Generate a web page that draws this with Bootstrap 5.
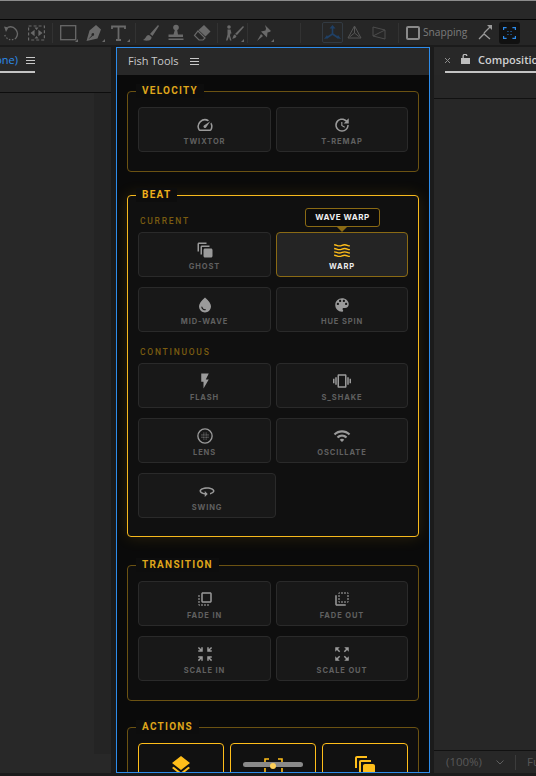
<!DOCTYPE html>
<html lang="en">
<head>
    <meta charset="UTF-8">
    <title>Fish Tools</title>
    <link href="https://cdn.jsdelivr.net/npm/bootstrap@5.3.3/dist/css/bootstrap.min.css" rel="stylesheet">
    <style>
        html, body { height: 776px; overflow: hidden; background: #1b1b1b; }
        body { font-family: "Open Sans", "Noto Sans", sans-serif; }

        /* app chrome */
        .top-strip { height: 20px; background: #282828; border-top: 1px solid #8c8c8c; border-bottom: 1px solid #050505; }
        .tool-strip { height: 25px; background: #262626; padding-left: 3px; color: #696969; }
        .tool-strip svg { display: block; flex: none; }
        .tool-sep { width: 1px; height: 20px; background: #323232; flex: none; }
        .mx5 { margin-left: 5px; } .mx6 { margin-left: 6px; } .mx7 { margin-left: 7px; } .mx9 { margin-left: 9px; } .mx3 { margin-left: 3px; }
        .mx26 { margin-left: 26px; } .mx11 { margin-left: 11px; } .mx12 { margin-left: 12px; }
        .axis-box { width: 21px; height: 21px; margin-left: 21px; border: 1px solid #323a42; border-radius: 2px; color: #1f4066; }
        .snap-box { width: 14px; height: 14px; border: 2px solid #8a8a8a; border-radius: 2px; margin-left: 7px; flex: none; }
        .snap-text { font-size: 10.2px; color: #7c7c7c; margin-left: 3px; }
        .focus-box { width: 21px; height: 22px; background: #111; border-radius: 3px; margin-left: 7px; color: #2d8ceb; }

        .work-row { height: 726px; margin-top: 2px; }
        .side-left { width: 111px; background: #282828; }
        .side-right { width: 102px; margin-left: 4px; background: #272727; }
        .panel-head { height: 28px; background: #282828; color: #c8c8c8; font-size: 11px; }
        .tab-line { height: 26px; padding-top: 3px; border-bottom: 2px solid #c4c4c4; white-space: nowrap; }
        .tab-none { width: 35px; }
        .tab-none span { color: #2d8ceb; }
        .tab-comp { margin-left: 11px; color: #d0d0d0; font-weight: 600; overflow: hidden; }
        .tab-comp span { flex: none; }
        .tab-x { margin-right: 11px; }
        .tab-lock { margin-right: 8px; margin-top: -4px; }
        .burger { width: 9px; height: 7px; border-top: 1px solid #c8c8c8; border-bottom: 1px solid #c8c8c8; position: relative; flex: none; }
        .burger::after { content: ""; position: absolute; left: 0; right: 0; top: 2px; height: 1px; background: #c8c8c8; }
        .sub-left { height: 18px; border-bottom: 1px solid #0d0d0d; background: #282828; }
        .sub-right { height: 24px; border-bottom: 1px solid #111; background: #272727; }
        .left-rest { width: 17px; height: 661px; background: #242424; }
        .right-foot { height: 23px; border-top: 1px solid #111; color: #585858; font-size: 11.5px; padding-left: 12px; white-space: nowrap; overflow: hidden; }
        .foot-chev { margin-left: 14px; flex: none; }
        .foot-sep { width: 1px; height: 15px; background: #3c3c3c; margin: 0 11px; flex: none; }

        /* fish tools panel */
        .fish-panel { width: 314px; margin-left: 5px; border: 1px solid #2d8ceb; overflow: hidden; background: #0b0b0b; }
        .fish-head { height: 27px; padding-left: 11px; background: #282828; color: #c8c8c8; font-size: 11px; gap: 11px; flex: none; }
        .fish-body { padding: 16px 10px 0; height: 700px; overflow: hidden; background: #0a0a0a; }
        .fx-group { position: relative; border: 1px solid #6b5212; border-radius: 4px; padding: 15px 10px 19px; margin-bottom: 23px; background: #0e0e0e; }
        .fx-group.is-hot { border-color: #f7b91d; background: #101010; padding-top: 19px; padding-bottom: 18px; margin-bottom: 28px; box-shadow: 0 0 16px rgba(255, 190, 30, .14); }
        .fx-group.is-trans { margin-bottom: 26px; }
        .fx-title { position: absolute; top: -8px; left: 8px; padding: 0 6px; height: 14px; line-height: 14px; background: #0d0d0d; color: #dfa51b; font-family: Roboto, sans-serif; font-size: 10px; font-weight: 700; letter-spacing: 1.25px; }
        .is-hot .fx-title { color: #efb01c; }
        .fx-sub { height: 12px; line-height: 12px; margin: 0 0 5px 2px; color: #7a5c10; font-family: Roboto, sans-serif; font-size: 8.5px; font-weight: 500; letter-spacing: 1.75px; }
        .fx-sub.next { margin-top: 14px; }
        .fx-grid { display: grid; grid-template-columns: 133px 132px; gap: 10px 5px; }
        .fx-btn { position: relative; height: 45px; padding-top: 8px; background: #181818; border: 1px solid #2a2a2a; border-radius: 4px; color: #9a9a9a; }
        .fx-btn svg { display: block; }
        .fx-btn span { margin-top: 3px; line-height: 10px; color: #606060; font-family: Inter, sans-serif; font-size: 7.5px; font-weight: 700; letter-spacing: .9px; }
        .fx-btn.is-on { background: #242424; border-color: #8a6a14; color: #ffbe1a; }
        .fx-btn.is-on span { color: #ececec; }
        .fx-wide { width: 138px; }
        .fx-tip { position: absolute; top: -25px; left: 28px; width: 75px; height: 19px; line-height: 16px; text-align: center; background: #0b0b0b; border: 1px solid #8a6a14; border-radius: 3px; color: #f0f0f0; font-family: Inter, sans-serif; font-size: 8px; font-weight: 700; letter-spacing: .5px; }
        .fx-tip::after { content: ""; position: absolute; left: 31px; top: 18px; border: 5px solid transparent; border-bottom-width: 0; border-top-color: #8a6a14; }
        .act-row { display: grid; grid-template-columns: repeat(3, 86px); gap: 6px; }
        .act-btn { height: 45px; padding-top: 10px; background: #111; border: 1px solid #ffbe1a; border-radius: 4px; color: #ffbe1a; }
        .act-btn svg { display: block; }
    </style>
</head>
<body class="d-flex flex-column">

<div class="top-strip"></div>

<!-- tool bar -->
<div class="tool-strip d-flex align-items-center">
    <svg width="16" height="18" viewBox="0 0 16 18" fill="none" stroke="currentColor" stroke-width="1.300"><path d="M4.500 3.500a7 7 0 0 1 8.500 10.500"/><path d="M13 14a7 7 0 0 1-11.500-4" stroke-dasharray="1.500 1.500"/><path d="M1 2.500l4.500 1L3 8z" fill="currentColor" stroke="none"/></svg>
    <svg class="mx9" width="17" height="16" viewBox="0 0 17 16" fill="none" stroke="currentColor" stroke-width="1.200" stroke-dasharray="3 2"><rect x=".6" y="1" width="15.800" height="14"/><path d="M3 8h1.500M14 8h-1.500M3.500 8L6 6v4zM13.500 8L11 6v4z" fill="currentColor" stroke-dasharray="none"/><path d="M6.500 2.500h4L8.500 5zM6.500 13.500h4L8.500 11z" fill="currentColor" stroke="none"/></svg>
    <div class="tool-sep mx7"></div>
    <svg class="mx7" width="18" height="18" viewBox="0 0 18 18" fill="none" stroke="currentColor" stroke-width="1.300"><rect x=".7" y="1.700" width="15" height="14"/><path d="M18 15v3h-3z" fill="currentColor" stroke="none"/></svg>
    <svg class="mx7" width="20" height="18" viewBox="0 0 20 18" fill="currentColor"><path d="M11 1l5 4.500-3.500 9L1.500 17l3-10.500zM6.800 11.300L3.500 15l1-.6 3.200-2.600a1.300 1.300 0 1 0-.9-.5z"/><path d="M20 15v3h-3z"/></svg>
    <svg class="mx6" width="19" height="18" viewBox="0 0 19 18" fill="none" stroke="currentColor" stroke-width="1.800"><path d="M1 5V2.500h13V5M7.500 2.500v13M5 16h5"/><path d="M19 15v3h-3z" fill="currentColor" stroke="none"/></svg>
    <div class="tool-sep mx5"></div>
    <svg class="mx5" width="18" height="18" viewBox="0 0 18 18" fill="currentColor"><path d="M17 1L9 10l2.500 2L18 2zM8 11c-3.500 0-2.500 3.500-6 5 4.500 1.500 9 .5 8.500-3z"/></svg>
    <svg class="mx9" width="16" height="18" viewBox="0 0 16 18" fill="currentColor"><circle cx="8" cy="3.500" r="2.800"/><path d="M6.800 6h2.400l.8 4.500h5v2.500H.5v-2.500h5zM.5 14.500h15V16H.5z"/></svg>
    <svg class="mx9" width="18" height="18" viewBox="0 0 18 18" fill="currentColor"><path d="M11 1l6.500 6.500-5 5L5.500 6z"/><path d="M5 7l7 7-2 2H6l-4.500-4.500z" fill="none" stroke="currentColor" stroke-width="1.200"/></svg>
    <div class="tool-sep mx6"></div>
    <svg class="mx6" width="20" height="18" viewBox="0 0 20 18" fill="currentColor"><circle cx="5" cy="3" r="1.800"/><path d="M3.500 5.500h3l1 4h-1l-.5 2 1.500 5H6l-1-4-1.500 4H2l1.500-6zM19 2l1 1-7 8-2-1zM10.500 10.500l2 1.500c-.5 2-2 2.500-4.500 2.500 1.500-1 1-3.500 2.500-4z"/><path d="M20 15v3h-3z"/></svg>
    <div class="tool-sep mx3"></div>
    <svg class="mx7" width="19" height="18" viewBox="0 0 19 18" fill="currentColor"><path d="M10 1l6 6-1.500 1-2 .5-.5 5-6-6 4.500-1 .5-2zM6 10l2 2-6 5z"/><path d="M19 15v3h-3z"/></svg>
    <div class="tool-sep mx26"></div>
    <div class="axis-box d-flex align-items-center justify-content-center">
        <svg width="17" height="15" viewBox="0 0 17 15" fill="none" stroke="currentColor" stroke-width="1.600"><path d="M8.500 2v7M8.500 9l-6 4M8.500 9l6 4"/><path d="M8.500 0l3 3.500h-6zM0 14l3-4 1.500 3zM17 14l-3-4-1.500 3z" fill="currentColor" stroke="none"/></svg>
    </div>
    <svg class="mx3" width="17" height="16" viewBox="0 0 17 16" fill="none" stroke="#555"><path d="M8.500 2v6M8.500 8l-5 4M8.500 8l5 4M8.500 1L2 13h13z"/></svg>
    <svg class="mx9" width="14" height="16" viewBox="0 0 14 16" fill="none" stroke="#4c4c4c"><path d="M1 2l12 3v9L1 11zM1 11l12-6"/></svg>
    <div class="tool-sep mx12"></div>
    <div class="snap-box"></div>
    <div class="snap-text">Snapping</div>
    <svg class="mx11" width="14" height="15" viewBox="0 0 14 15" fill="none" stroke="#9a9a9a" stroke-width="1.300"><path d="M1 14l5-5 6 5M6 8l7-7"/><path d="M14 0v5l-5-5z" fill="#9a9a9a" stroke="none"/></svg>
    <div class="focus-box d-flex align-items-center justify-content-center">
        <svg width="13" height="12" viewBox="0 0 13 12" fill="none" stroke="currentColor" stroke-width="1.200"><path d="M.6 3V.6h3M9.400.6h3V3M12.400 9v2.400h-3M3.600 11.400h-3V9M4.500 4.500h.9M7.600 4.500h.9M4.500 7.500h.9M7.600 7.500h.9"/></svg>
    </div>
</div>

<div class="work-row d-flex">
    <!-- left panel -->
    <div class="side-left d-flex flex-column">
        <div class="panel-head">
            <div class="tab-line tab-none d-flex align-items-center justify-content-end gap-2">
                <span>(none)</span>
                <div class="burger"></div>
            </div>
        </div>
        <div class="sub-left"></div>
        <div class="d-flex justify-content-end">
            <div class="left-rest"></div>
        </div>
    </div>

    <!-- fish tools -->
    <div class="fish-panel d-flex flex-column">
        <div class="fish-head d-flex align-items-center">
            <span>Fish Tools</span>
            <div class="burger"></div>
        </div>
        <div class="fish-body">

            <div class="fx-group">
                <div class="fx-title">VELOCITY</div>
                <div class="fx-grid">
                    <div class="fx-btn d-flex flex-column align-items-center">
                        <svg width="18" height="18" viewBox="0 0 24 24" fill="currentColor"><path d="M20.380 8.570l-1.230 1.850a8 8 0 0 1-.22 7.580H5.070A8 8 0 0 1 15.580 6.850l1.850-1.230A10 10 0 0 0 3.350 19a2 2 0 0 0 1.720 1h13.850a2 2 0 0 0 1.740-1 10 10 0 0 0-.27-10.430zm-9.790 6.840a2 2 0 0 0 2.830 0l5.660-8.490-8.490 5.660a2 2 0 0 0 0 2.830z"/></svg>
                        <span>TWIXTOR</span>
                    </div>
                    <div class="fx-btn d-flex flex-column align-items-center">
                        <svg width="18" height="18" viewBox="0 0 24 24" fill="currentColor"><path d="M21 10.120h-6.780l2.740-2.820c-2.730-2.700-7.150-2.800-9.880-.1-2.730 2.710-2.730 7.080 0 9.790s7.150 2.710 9.880 0C18.320 15.650 19 14.080 19 12.100h2c0 1.980-.88 4.550-2.640 6.290-3.510 3.480-9.210 3.480-12.720 0-3.500-3.470-3.530-9.110-.02-12.580s9.140-3.470 12.650 0L21 3v7.120zM12.500 8v4.250l3.500 2.080-.72 1.210L11 13V8h1.500z"/></svg>
                        <span>T-REMAP</span>
                    </div>
                </div>
            </div>

            <div class="fx-group is-hot">
                <div class="fx-title">BEAT</div>
                <div class="fx-sub">CURRENT</div>
                <div class="fx-grid">
                    <div class="fx-btn d-flex flex-column align-items-center">
                        <svg width="18" height="18" viewBox="0 0 24 24" fill="currentColor"><path d="M14 2H4c-1.100 0-2 .9-2 2v10h2V4h10V2zm4 4H8c-1.100 0-2 .9-2 2v10h2V8h10V6zm2 4h-8c-1.100 0-2 .9-2 2v8c0 1.100.9 2 2 2h8c1.100 0 2-.9 2-2v-8c0-1.100-.9-2-2-2z"/></svg>
                        <span>GHOST</span>
                    </div>
                    <div class="fx-btn is-on d-flex flex-column align-items-center">
                        <div class="fx-tip">WAVE WARP</div>
                        <svg width="18" height="18" viewBox="0 0 24 24" fill="none" stroke="currentColor" stroke-width="1.900"><path d="M1.500 5c3.500 0 3.500 1.500 7 1.500S12 5 15.500 5s3.500 1.500 7 1.500"/><path d="M1.500 10c3.500 0 3.500 1.500 7 1.500S12 10 15.500 10s3.500 1.500 7 1.500"/><path d="M1.500 14.500c3.500 0 3.500 1.500 7 1.500s3.500-1.500 7-1.500 3.500 1.500 7 1.500"/><path d="M1.500 19c3.500 0 3.500 1.500 7 1.500S12 19 15.500 19s3.500 1.500 7 1.500"/></svg>
                        <span>WARP</span>
                    </div>
                    <div class="fx-btn d-flex flex-column align-items-center">
                        <svg width="18" height="18" viewBox="0 0 24 24" fill="currentColor" fill-rule="evenodd"><path d="M12 2c-5.330 4.550-8 8.480-8 11.800 0 4.980 3.800 8.200 8 8.200s8-3.220 8-8.200c0-3.320-2.670-7.250-8-11.800zM7.830 14c.37 0 .67.26.74.62.41 2.220 2.280 2.980 3.640 2.870.43-.02.79.32.79.75 0 .4-.32.73-.72.75-2.130.13-4.620-1.090-5.190-4.120-.08-.45.28-.87.74-.87z"/></svg>
                        <span>MID-WAVE</span>
                    </div>
                    <div class="fx-btn d-flex flex-column align-items-center">
                        <svg width="18" height="18" viewBox="0 0 24 24" fill="currentColor"><path d="M12 3c-4.970 0-9 4.030-9 9s4.030 9 9 9c.83 0 1.500-.67 1.500-1.500 0-.39-.15-.74-.39-1.010-.23-.26-.38-.61-.38-.99 0-.83.67-1.500 1.500-1.500H16c2.760 0 5-2.240 5-5 0-4.420-4.030-8-9-8zm-5.500 9c-.83 0-1.500-.67-1.500-1.500S5.670 9 6.500 9 8 9.670 8 10.500 7.330 12 6.500 12zm3-4C8.670 8 8 7.330 8 6.500S8.670 5 9.500 5s1.500.67 1.500 1.500S10.330 8 9.500 8zm5 0c-.83 0-1.500-.67-1.500-1.500S13.670 5 14.500 5s1.500.67 1.500 1.500S15.330 8 14.500 8zm3 4c-.83 0-1.500-.67-1.500-1.500S16.670 9 17.500 9s1.500.67 1.500 1.500-.67 1.500-1.500 1.500z"/></svg>
                        <span>HUE SPIN</span>
                    </div>
                </div>
                <div class="fx-sub next">CONTINUOUS</div>
                <div class="fx-grid">
                    <div class="fx-btn d-flex flex-column align-items-center">
                        <svg width="18" height="18" viewBox="0 0 24 24" fill="currentColor"><path d="M7 2v11h3v9l7-12h-4l4-8z"/></svg>
                        <span>FLASH</span>
                    </div>
                    <div class="fx-btn d-flex flex-column align-items-center">
                        <svg width="18" height="18" viewBox="0 0 24 24" fill="currentColor"><path d="M0 15h2V9H0v6zm3 2h2V7H3v10zm19-8v6h2V9h-2zm-3 8h2V7h-2v10zM16.500 3h-9C6.670 3 6 3.670 6 4.500v15c0 .83.67 1.500 1.500 1.500h9c.83 0 1.500-.67 1.500-1.500v-15c0-.83-.67-1.500-1.500-1.500zM16 19H8V5h8v14z"/></svg>
                        <span>S_SHAKE</span>
                    </div>
                    <div class="fx-btn d-flex flex-column align-items-center">
                        <svg width="18" height="18" viewBox="0 0 24 24" fill="currentColor"><circle cx="12" cy="12" r="9.500" fill="none" stroke="currentColor" stroke-width="1.800"/><circle cx="10.500" cy="8" r=".7"/><circle cx="13.500" cy="8" r=".7"/><circle cx="8" cy="10.500" r=".7"/><circle cx="16" cy="10.500" r=".7"/><circle cx="10.500" cy="10.500" r=".9"/><circle cx="13.500" cy="10.500" r=".9"/><circle cx="8" cy="13.500" r=".7"/><circle cx="16" cy="13.500" r=".7"/><circle cx="10.500" cy="13.500" r=".9"/><circle cx="13.500" cy="13.500" r=".9"/><circle cx="10.500" cy="16" r=".7"/><circle cx="13.500" cy="16" r=".7"/></svg>
                        <span>LENS</span>
                    </div>
                    <div class="fx-btn d-flex flex-column align-items-center">
                        <svg width="18" height="18" viewBox="0 0 24 24" fill="currentColor"><path d="M1 9l2 2c4.970-4.970 13.030-4.970 18 0l2-2C16.930 2.930 7.080 2.930 1 9zm8 8l3 3 3-3c-1.650-1.660-4.340-1.660-6 0zm-4-4l2 2c2.760-2.760 7.240-2.760 10 0l2-2C15.140 9.140 8.870 9.140 5 13z"/></svg>
                        <span>OSCILLATE</span>
                    </div>
                    <div class="fx-btn fx-wide d-flex flex-column align-items-center">
                        <svg width="18" height="18" viewBox="0 0 24 24" fill="currentColor"><path d="M12 7C6.480 7 2 9.240 2 12c0 2.240 2.940 4.130 7 4.770V20l4-4-4-4v2.730c-3.150-.56-5-1.900-5-2.730 0-1.060 3.040-3 8-3s8 1.940 8 3c0 .73-1.460 1.890-4 2.530v2.050c3.530-.77 6-2.530 6-4.580 0-2.760-4.480-5-10-5z"/></svg>
                        <span>SWING</span>
                    </div>
                </div>
            </div>

            <div class="fx-group is-trans">
                <div class="fx-title">TRANSITION</div>
                <div class="fx-grid">
                    <div class="fx-btn d-flex flex-column align-items-center">
                        <svg width="18" height="18" viewBox="0 0 24 24" fill="currentColor"><path d="M3 13h2v-2H3v2zm0 4h2v-2H3v2zm2 4v-2H3c0 1.100.89 2 2 2zM3 9h2V7H3v2zm12 12h2v-2h-2v2zm4-18H9c-1.110 0-2 .9-2 2v10c0 1.100.89 2 2 2h10c1.100 0 2-.9 2-2V5c0-1.100-.9-2-2-2zm0 12H9V5h10v10zm-8 6h2v-2h-2v2zm-4 0h2v-2H7v2z"/></svg>
                        <span>FADE IN</span>
                    </div>
                    <div class="fx-btn d-flex flex-column align-items-center">
                        <svg width="18" height="18" viewBox="0 0 24 24" fill="currentColor"><path d="M9 7H7v2h2V7zm0 4H7v2h2v-2zm0-8c-1.110 0-2 .9-2 2h2V3zm4 12h-2v2h2v-2zm6-12v2h2c0-1.100-.9-2-2-2zm-6 0h-2v2h2V3zM9 17v-2H7c0 1.100.89 2 2 2zm10-4h2v-2h-2v2zm0-4h2V7h-2v2zm0 8c1.100 0 2-.9 2-2h-2v2zM5 7H3v12c0 1.100.89 2 2 2h12v-2H5V7zm10-2h2V3h-2v2zm0 12h2v-2h-2v2z"/></svg>
                        <span>FADE OUT</span>
                    </div>
                    <div class="fx-btn d-flex flex-column align-items-center">
                        <svg width="18" height="18" viewBox="0 0 24 24" fill="currentColor"><path d="M9 9V3H7v2.590L3.910 2.500 2.500 3.910 5.590 7H3v2h6zm12 0V7h-2.590l3.090-3.090-1.410-1.410L17 5.590V3h-2v6h6zM3 15v2h2.590L2.500 20.090l1.410 1.410L7 18.410V21h2v-6H3zm12 0v6h2v-2.590l3.090 3.090 1.410-1.410L18.410 17H21v-2h-6z"/></svg>
                        <span>SCALE IN</span>
                    </div>
                    <div class="fx-btn d-flex flex-column align-items-center">
                        <svg width="18" height="18" viewBox="0 0 24 24" fill="currentColor"><path d="M15 3l2.300 2.300-2.890 2.870 1.420 1.420L18.700 6.700 21 9V3h-6zM3 9l2.300-2.300 2.870 2.890 1.420-1.420L6.700 5.300 9 3H3v6zm6 12l-2.300-2.300 2.890-2.870-1.420-1.420L5.300 17.300 3 15v6h6zm12-6l-2.300 2.300-2.870-2.890-1.420 1.420 2.890 2.870L15 21h6v-6z"/></svg>
                        <span>SCALE OUT</span>
                    </div>
                </div>
            </div>

            <div class="fx-group">
                <div class="fx-title">ACTIONS</div>
                <div class="act-row">
                    <div class="act-btn d-flex justify-content-center">
                        <svg width="24" height="24" viewBox="0 0 24 24" fill="currentColor"><path d="M11.990 18.540l-7.370-5.730L3 14.070l9 7 9-7-1.630-1.270-7.380 5.740zM12 16l7.360-5.730L21 9l-9-7-9 7 1.630 1.270L12 16z"/></svg>
                    </div>
                    <div class="act-btn d-flex justify-content-center">
                        <svg width="60" height="24" viewBox="0 0 60 24" fill="none"><path d="M22 9V5h4M35 5h4v4M22 14v6M39 14v6" stroke="currentColor" stroke-width="1.600"/><rect y="8" width="60" height="5" rx="2.500" fill="#8a8a8a"/><circle cx="30" cy="12" r="3" fill="#ffd05a"/></svg>
                    </div>
                    <div class="act-btn d-flex justify-content-center">
                        <svg width="24" height="24" viewBox="0 0 24 24" fill="currentColor"><path d="M14 2H4c-1.100 0-2 .9-2 2v10h2V4h10V2zm4 4H8c-1.100 0-2 .9-2 2v10h2V8h10V6zm2 4h-8c-1.100 0-2 .9-2 2v8c0 1.100.9 2 2 2h8c1.100 0 2-.9 2-2v-8c0-1.100-.9-2-2-2z"/></svg>
                    </div>
                </div>
            </div>

        </div>
    </div>

    <!-- composition panel -->
    <div class="side-right d-flex flex-column">
        <div class="panel-head">
            <div class="tab-line tab-comp d-flex align-items-center">
                <svg class="tab-x flex-shrink-0" width="5" height="5" viewBox="0 0 5 5" stroke="#8c8c8c" fill="none"><path d="M0 0l5 5M5 0L0 5"/></svg>
                <svg class="tab-lock flex-shrink-0" width="9" height="10" viewBox="0 0 9 10" fill="#bdbdbd"><path d="M0 4h9v6H0zM1.500 4V2.500a2.500 2.500 0 0 1 5-.5H5.200a1.200 1.200 0 0 0-2.400.5V4z"/></svg>
                <span>Composition</span>
            </div>
        </div>
        <div class="sub-right"></div>
        <div class="flex-grow-1"></div>
        <div class="right-foot d-flex align-items-center">
            (100%)
            <svg class="foot-chev" width="8" height="5" viewBox="0 0 8 5" fill="none" stroke="#5f5f5f"><path d="M.5.5L4 4 7.500.5"/></svg>
            <div class="foot-sep"></div>
            Full
        </div>
    </div>
</div>

</body>
</html>
